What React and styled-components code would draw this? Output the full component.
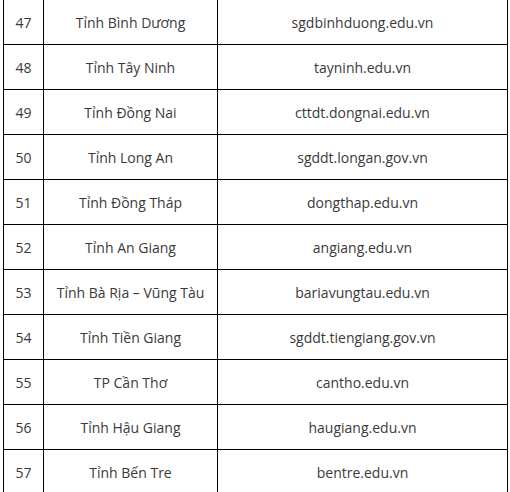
import styled, { createGlobalStyle } from "styled-components";

const rows = [
  ["47", "Tỉnh Bình Dương", "sgdbinhduong.edu.vn"],
  ["48", "Tỉnh Tây Ninh", "tayninh.edu.vn"],
  ["49", "Tỉnh Đồng Nai", "cttdt.dongnai.edu.vn"],
  ["50", "Tỉnh Long An", "sgddt.longan.gov.vn"],
  ["51", "Tỉnh Đồng Tháp", "dongthap.edu.vn"],
  ["52", "Tỉnh An Giang", "angiang.edu.vn"],
  ["53", "Tỉnh Bà Rịa – Vũng Tàu", "bariavungtau.edu.vn"],
  ["54", "Tỉnh Tiền Giang", "sgddt.tiengiang.gov.vn"],
  ["55", "TP Cần Thơ", "cantho.edu.vn"],
  ["56", "Tỉnh Hậu Giang", "haugiang.edu.vn"],
  ["57", "Tỉnh Bến Tre", "bentre.edu.vn"],
];

const GlobalStyle = createGlobalStyle`
  html, body {
    margin: 0;
    padding: 0;
    background: #fff;
  }
  body {
    font-family: "Open Sans", "Noto Sans", sans-serif;
    color: #333;
    overflow: hidden;
  }
`;

// table sits 3px in from the left, its top border just above the window
const Wrapper = styled.div`
  padding-left: 3px;
  margin-top: -1px;
`;

const Table = styled.table`
  border-collapse: collapse;
  table-layout: fixed;
  width: 504px;
  font-size: 14px;
`;

const Col = styled.col`
  width: ${(p) => p.$w}px;
`;

const Cell = styled.td`
  border: 1px solid #000;
  height: 45px;
  padding: 0 4px;
  text-align: center;
  vertical-align: middle;
  white-space: nowrap;
  box-sizing: border-box;
  color: #3a3a3a;
`;

function App() {
  return (
    <Wrapper>
      <GlobalStyle />
      <Table>
        <colgroup>
          <Col $w={40} />
          <Col $w={174} />
          <Col $w={290} />
        </colgroup>
        <tbody>
          {rows.map(([no, name, site]) => (
            <tr key={no}>
              <Cell>{no}</Cell>
              <Cell>{name}</Cell>
              <Cell>{site}</Cell>
            </tr>
          ))}
        </tbody>
      </Table>
    </Wrapper>
  );
}

export default App;
